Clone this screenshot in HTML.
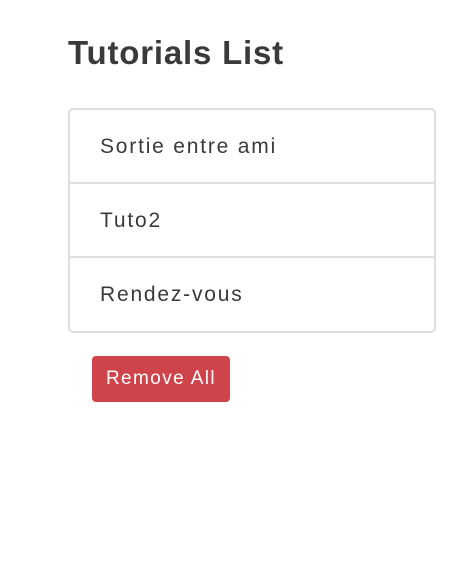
<!DOCTYPE html>
<html><head><style>
body{margin:0;background:#fff;font-family:"Liberation Sans",sans-serif;color:#333;}
h4{position:absolute;left:68px;top:31px;margin:0;font-size:33px;font-weight:bold;line-height:44px;color:#3a3a3a;letter-spacing:0.8px}
.list{position:absolute;left:68px;top:108px;width:364px;height:221px;border:2px solid #dfdfdf;border-radius:5px;}
.item{height:73px;border-bottom:2px solid #dfdfdf;box-sizing:border-box;padding-left:30px;line-height:74px;font-size:21px;color:#3a3a3a;letter-spacing:1.8px}
.item:last-child{border-bottom:none}
.btn{position:absolute;left:92px;top:356px;width:138px;height:46px;background:#cf444b;border-radius:4px;color:#fff;font-size:19px;line-height:46px;text-align:center;letter-spacing:1.4px}
</style></head><body>
<h4>Tutorials List</h4>
<div class="list">
<div class="item" style="height:74px">Sortie entre ami</div>
<div class="item" style="height:74px">Tuto2</div>
<div class="item">Rendez-vous</div>
</div>
<div class="btn">Remove All</div>
</body></html>
